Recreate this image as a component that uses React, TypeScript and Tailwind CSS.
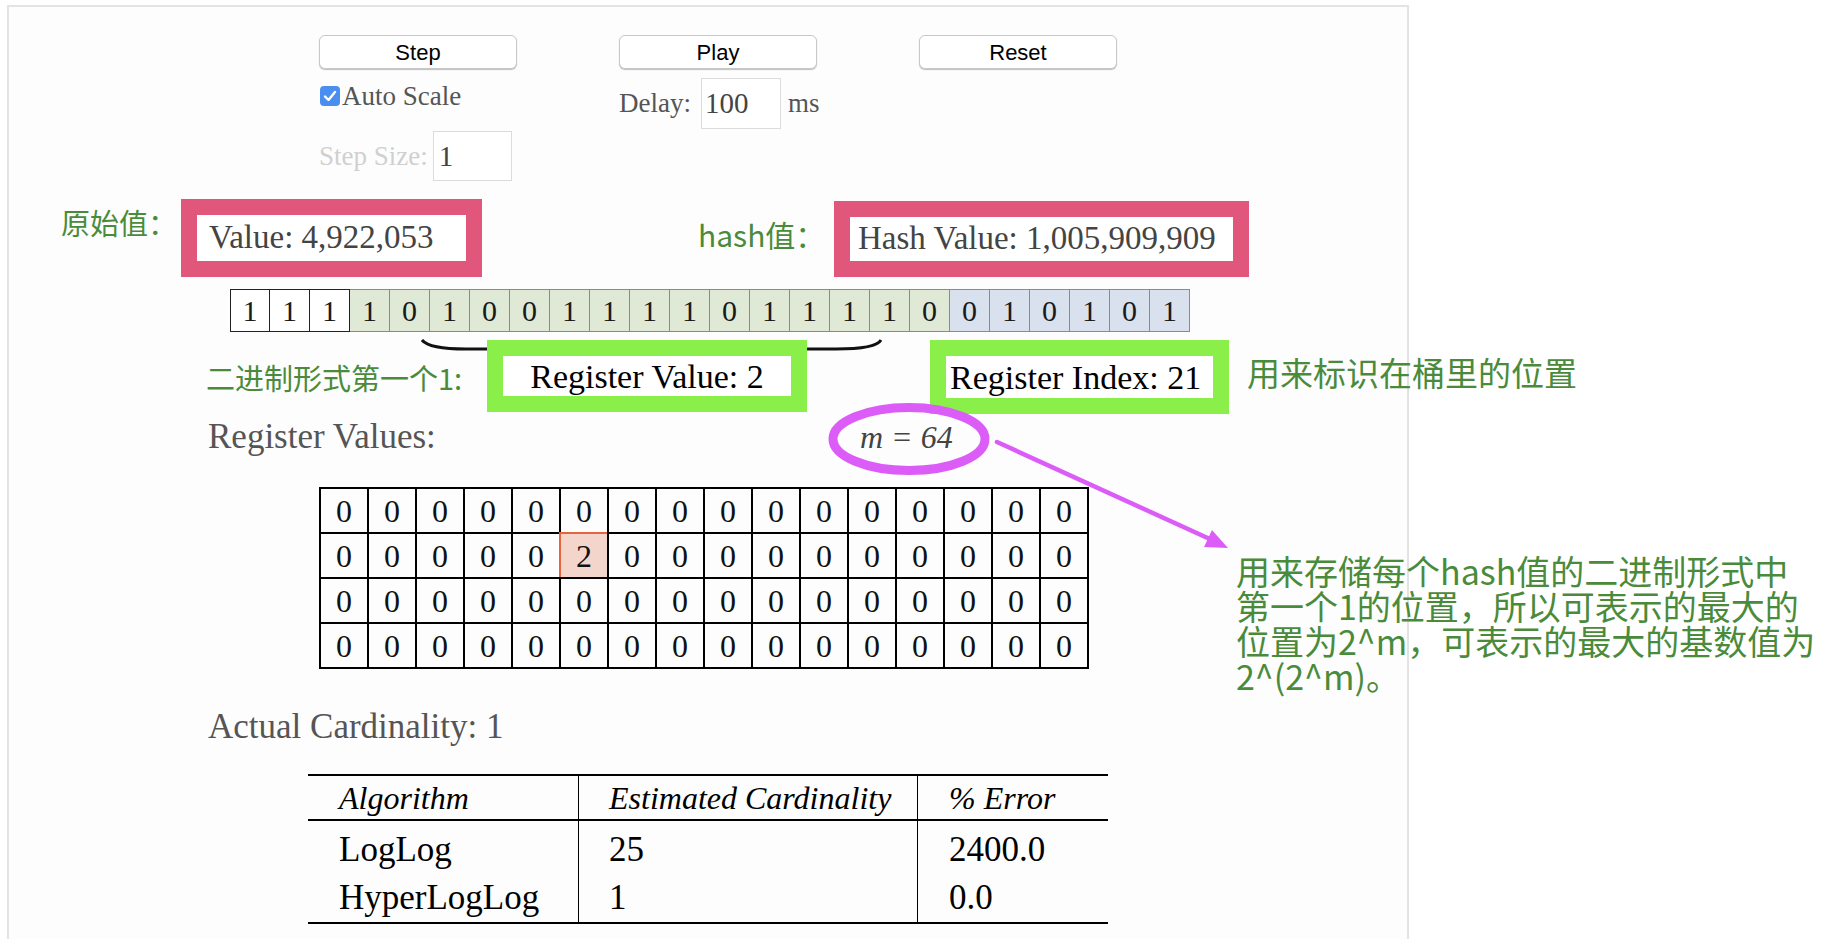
const bits = [1, 1, 1, 1, 0, 1, 0, 0, 1, 1, 1, 1, 0, 1, 1, 1, 1, 0, 0, 1, 0, 1, 0, 1];
const registers = Array.from({ length: 64 }, (_, i) => (i === 21 ? 2 : 0));

const serif = "font-['Liberation_Serif',serif]";
const cjk = "font-['Noto_Sans_CJK_SC',sans-serif] text-[#4a8b3b] whitespace-nowrap shrink-0";

const Button = ({ label }: { label: string }) => (
  <button
    type="button"
    className="w-[198px] h-[34px] rounded-[6px] border border-[#c8c8c8] bg-white shadow-[0_1px_1px_rgba(0,0,0,0.25)] font-['Liberation_Sans',sans-serif] text-[22px] text-black"
  >
    {label}
  </button>
);

const bitCell = (i: number) => {
  if (i < 3) return "bg-white border-[#222]";
  if (i < 18) return "bg-[#dfe9d6] border-[#6aa551]";
  return "bg-[#d9e1ef] border-[#6d8fc2]";
};

export default function App() {
  return (
    <div className="h-[939px] w-[1834px] overflow-hidden bg-white">
      <div className="relative ml-[7px] mt-[5px] h-[934px] w-[1402px] border-2 border-b-0 border-[#e3e3e3] bg-[#fdfdfd]">
        {/* controls */}
        <div className="flex pl-[310px] pt-[28px]">
          <div className="w-[300px] shrink-0">
            <Button label="Step" />
            <div className="mt-[16px] flex h-[22px] items-center">
              <svg width="20" height="20" viewBox="0 0 20 20" className="ml-[1px] shrink-0">
                <rect x="0" y="0" width="20" height="20" rx="4" fill="#4a8ff0" />
                <path d="M5 10.5 L8.5 14 L15 6" fill="none" stroke="white" strokeWidth="2.4" strokeLinecap="round" strokeLinejoin="round" />
              </svg>
              <span className={`${serif} ml-[2px] text-[27px] text-[#555]`}>Auto Scale</span>
            </div>
            <div className="mt-[24px] flex items-center">
              <span className={`${serif} text-[27px] text-[#d0d0d0]`}>Step Size:</span>
              <input
                readOnly
                defaultValue="1"
                className={`${serif} ml-[5px] h-[50px] w-[79px] border border-[#dcdcdc] bg-white px-[5px] text-[29px] text-[#444] outline-none`}
              />
            </div>
          </div>
          <div className="w-[300px] shrink-0">
            <Button label="Play" />
            <div className="mt-[9px] flex items-center">
              <span className={`${serif} text-[27px] text-[#555]`}>Delay:</span>
              <input
                readOnly
                defaultValue="100"
                className={`${serif} ml-[10px] h-[51px] w-[80px] border border-[#dcdcdc] bg-white px-[3px] text-[29px] text-[#444] outline-none`}
              />
              <span className={`${serif} ml-[7px] text-[27px] text-[#555]`}>ms</span>
            </div>
          </div>
          <div className="w-[300px] shrink-0">
            <Button label="Reset" />
          </div>
        </div>

        {/* value / hash */}
        <div className="mt-[18px] flex items-start">
          <div className={`${cjk} ml-[52px] mt-[3px] w-[120px] text-[29px] leading-[40px]`}>原始值：</div>
          <div className={`${serif} flex h-[78px] w-[301px] shrink-0 items-center whitespace-nowrap border-[16px] border-[#e0577b] bg-white pl-[12px] text-[33px] text-[#444]`}>
            Value: 4,922,053
          </div>
          <div className={`${cjk} ml-[216px] mt-[15px] w-[136px] text-[30px] leading-[40px]`}>hash值：</div>
          <div className={`${serif} mt-[2px] flex h-[76px] w-[415px] shrink-0 items-center whitespace-nowrap border-[16px] border-[#e0577b] bg-white pl-[8px] text-[33px] text-[#444]`}>
            Hash Value: 1,005,909,909
          </div>
        </div>

        {/* bits */}
        <div className="relative ml-[221px] mt-[12px] flex h-[43px]">
          {bits.map((b, i) => (
            <div
              key={i}
              className={`${bitCell(i)} ${serif} flex h-[43px] w-[40px] shrink-0 items-center justify-center border-y-[1.5px] border-r-[1.5px] ${i === 0 ? "border-l-[1.5px]" : ""} text-[30px] text-[#1a1a1a]`}
            >
              {b}
            </div>
          ))}
          <svg className="absolute left-[191px] top-[50px]" width="462" height="14" viewBox="0 0 462 14">
            <path d="M1 1 Q 8 10 45 10 L 415 10 Q 455 10 460 1" fill="none" stroke="#111" strokeWidth="3" />
          </svg>
        </div>

        {/* register value / index */}
        <div className="mt-[8px] flex items-start">
          <div className={`${cjk} ml-[197px] mt-[17px] w-[281px] text-[29px] leading-[40px]`}>二进制形式第一个1:</div>
          <div className={`${serif} relative flex h-[72px] w-[320px] shrink-0 items-center justify-center whitespace-nowrap border-[16px] border-[#8bef49] bg-white text-[34px] text-black`}>
            Register Value: 2
          </div>
          <div className={`${serif} relative ml-[123px] flex h-[74px] w-[299px] shrink-0 items-center whitespace-nowrap border-[16px] border-[#8bef49] bg-white pl-[4px] text-[34px] text-black`}>
            Register Index: 21
          </div>
          <div className={`${cjk} ml-[18px] mt-[12px] text-[33px] leading-[40px]`}>用来标识在桶里的位置</div>
        </div>

        {/* register values title */}
        <div className="flex h-[46px] items-center">
          <div className={`${serif} ml-[199px] w-[652px] shrink-0 text-[35px] text-[#555]`}>Register Values:</div>
          <div className={`${serif} whitespace-nowrap text-[32px] italic text-[#444]`}>m = 64</div>
        </div>

        {/* register grid */}
        <div className="ml-[310px] mt-[27px] grid w-[770px] grid-cols-[repeat(16,48px)] border-b-2 border-r-2 border-black">
          {registers.map((v, i) => (
            <div
              key={i}
              className={`${serif} flex h-[45px] items-center justify-center border-l-2 border-t-2 text-[32px] text-[#111] ${
                v ? "border-[#e8643c] bg-[#f4d5cc]" : "border-black"
              }`}
            >
              {v}
            </div>
          ))}
        </div>

        <div className={`${serif} ml-[199px] mt-[38px] flex h-[40px] items-center text-[35px] text-[#555]`}>
          Actual Cardinality: 1
        </div>

        {/* results table */}
        <div className={`${serif} ml-[299px] mt-[27px] grid w-[800px] grid-cols-[270px_339px_191px] border-y-2 border-black text-black`}>
          <div className="flex h-[45px] items-center border-b-2 border-black pl-[31px] text-[32px] italic">Algorithm</div>
          <div className="flex h-[45px] items-center border-b-2 border-l border-black pl-[30px] text-[32px] italic">Estimated Cardinality</div>
          <div className="flex h-[45px] items-center border-b-2 border-l border-black pl-[31px] text-[32px] italic">% Error</div>
          <div className="flex h-[53px] items-center pl-[31px] pt-[6px] text-[35px]">LogLog</div>
          <div className="flex h-[53px] items-center border-l border-black pl-[30px] pt-[6px] text-[35px]">25</div>
          <div className="flex h-[53px] items-center border-l border-black pl-[31px] pt-[6px] text-[35px]">2400.0</div>
          <div className="flex h-[48px] items-center pl-[31px] text-[35px]">HyperLogLog</div>
          <div className="flex h-[48px] items-center border-l border-black pl-[30px] text-[35px]">1</div>
          <div className="flex h-[48px] items-center border-l border-black pl-[31px] text-[35px]">0.0</div>
        </div>

        {/* annotation overlays */}
        <svg className="absolute left-[811px] top-[388px]" width="420" height="165" viewBox="0 0 420 165">
          <ellipse cx="89" cy="44" rx="76" ry="31.5" fill="none" stroke="#dc5cf7" strokeWidth="9" />
          <line x1="177" y1="47" x2="392" y2="145" stroke="#dc5cf7" strokeWidth="4.5" strokeLinecap="round" />
          <polygon points="408,153 384,152 392,135" fill="#dc5cf7" />
        </svg>
        <div className={`${cjk} absolute left-[1227px] top-[546px] text-[34px] leading-[35px]`}>
          用来存储每个hash值的二进制形式中
          <br />
          第一个1的位置，所以可表示的最大的
          <br />
          位置为2^m，可表示的最大的基数值为
          <br />
          2^(2^m)。
        </div>
      </div>
    </div>
  );
}
